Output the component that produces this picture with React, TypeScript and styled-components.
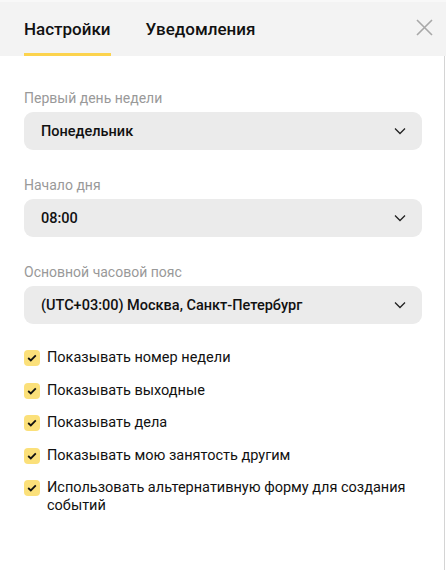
import React from "react";
import styled, { createGlobalStyle } from "styled-components";

const GlobalStyle = createGlobalStyle`
  html, body {
    margin: 0;
    padding: 0;
    background: #fff;
    font-family: Roboto, "Noto Sans", sans-serif;
    color: #000;
  }
`;

const Page = styled.div`
  width: 446px;
  height: 570px;
  display: flex;
  flex-direction: column;
  background: #fff;
  overflow: hidden;
`;

const Header = styled.div`
  height: 56px;
  flex: none;
  display: flex;
  align-items: stretch;
  padding-left: 24px;
  background: #f3f3f3;
  border-top: 2px solid #f8f8f8;
  box-sizing: border-box;
`;

const Tabs = styled.div`
  display: flex;
  gap: 35px;
  flex: 1;
`;

const Tab = styled.div<{ $active?: boolean }>`
  display: flex;
  align-items: center;
  font-size: 17px;
  font-weight: 500;
  color: #111;
  padding-top: 2px;
  border-bottom: 3px solid ${(p) => (p.$active ? "#fcd34d" : "transparent")};
  box-sizing: border-box;
`;

const Close = styled.button`
  width: 44px;
  border: none;
  background: none;
  padding: 0 0 3px;
  display: flex;
  align-items: center;
  justify-content: center;
  color: #a8a8a8;
`;

const Body = styled.div`
  flex: 1;
  width: 445px;
  border-right: 1px solid #d4d4d4;
  box-sizing: border-box;
  padding: 33px 22px 0 24px;
  display: flex;
  flex-direction: column;
`;

const Field = styled.div`
  display: flex;
  flex-direction: column;
  gap: 5px;
  margin-bottom: 26px;
`;

const Label = styled.div`
  font-size: 14px;
  line-height: 18px;
  color: #999;
`;

const Select = styled.div`
  height: 38px;
  border-radius: 9px;
  background: #ebebeb;
  display: flex;
  align-items: center;
  justify-content: space-between;
  padding: 0 16px 0 17px;
  font-size: 14.5px;
  font-weight: 500;
  color: #111;
`;

const Checks = styled.div`
  display: flex;
  flex-direction: column;
  gap: 14.6px;
  margin-top: -1px;
`;

const CheckRow = styled.label`
  display: flex;
  align-items: flex-start;
  gap: 7px;
  font-size: 14.5px;
  line-height: 18px;
  color: #111;
`;

const Box = styled.span`
  flex: 0 0 16px;
  width: 16px;
  height: 16px;
  margin-top: 1px;
  border-radius: 4px;
  background: #fbe07a;
  display: flex;
  align-items: center;
  justify-content: center;
`;

const Chevron = () => (
  <svg width="12" height="8" viewBox="0 0 12 8" fill="none">
    <path d="M1 1.5L6 6.5L11 1.5" stroke="#222" strokeWidth="1.3" />
  </svg>
);

const Tick = () => (
  <svg width="10" height="8" viewBox="0 0 10 8" fill="none">
    <path d="M1.2 4L3.8 6.4L8.8 1.4" stroke="#111" strokeWidth="1.8" />
  </svg>
);

const fields = [
  { label: "Первый день недели", value: "Понедельник" },
  { label: "Начало дня", value: "08:00" },
  { label: "Основной часовой пояс", value: "(UTC+03:00) Москва, Санкт-Петербург" },
];

const options = [
  "Показывать номер недели",
  "Показывать выходные",
  "Показывать дела",
  "Показывать мою занятость другим",
  "Использовать альтернативную форму для создания событий",
];

export default function App() {
  return (
    <Page>
      <GlobalStyle />
      <Header>
        <Tabs>
          <Tab $active>Настройки</Tab>
          <Tab>Уведомления</Tab>
        </Tabs>
        <Close aria-label="Закрыть">
          <svg width="17" height="17" viewBox="0 0 17 17" fill="none">
            <path d="M1 1L16 16M16 1L1 16" stroke="currentColor" strokeWidth="1.6" />
          </svg>
        </Close>
      </Header>
      <Body>
        {fields.map((f) => (
          <Field key={f.label}>
            <Label>{f.label}</Label>
            <Select>
              <span>{f.value}</span>
              <Chevron />
            </Select>
          </Field>
        ))}
        <Checks>
          {options.map((o) => (
            <CheckRow key={o}>
              <Box>
                <Tick />
              </Box>
              <span>{o}</span>
            </CheckRow>
          ))}
        </Checks>
      </Body>
    </Page>
  );
}
